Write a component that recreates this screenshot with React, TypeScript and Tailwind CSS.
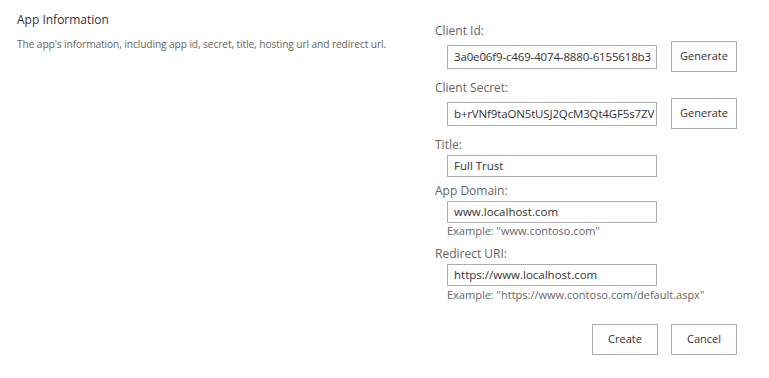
import React from "react";

function Label({ children }: { children: React.ReactNode }) {
  return <div className="text-[12px] leading-[16px] text-[#666666]">{children}</div>;
}

function Input({ value }: { value: string }) {
  return (
    <div className="w-[210px] h-[22px] border border-[#ababab] bg-white pl-[6px] pr-[2px] flex items-center overflow-hidden whitespace-nowrap text-[11.5px] text-[#333333]">
      {value}
    </div>
  );
}

function Btn({ children }: { children: React.ReactNode }) {
  return (
    <div className="w-[66px] h-[31px] border border-[#ababab] bg-white flex items-center justify-center text-[11px] text-[#333333]">
      {children}
    </div>
  );
}

export default function App() {
  return (
    <div className="w-[769px] h-[378px] bg-white flex" style={{ fontFamily: '"Open Sans", "Noto Sans", sans-serif' }}>
      <div className="w-[435px] pl-[17px] pt-[12px]">
        <div className="text-[12px] leading-[16px] text-[#333333]">App Information</div>
        <div className="mt-[9px] text-[10.2px] leading-[14px] text-[#666666] tracking-[-0.1px]">
          The app's information, including app id, secret, title, hosting url and redirect url.
        </div>
      </div>
      <div className="pt-[23px] flex flex-col">
        <Label>Client Id:</Label>
        <div className="mt-[2px] pl-[12px] flex items-center">
          <div className="w-[210px] h-[24px] border border-[#ababab] pl-[6px] flex items-center overflow-hidden whitespace-nowrap text-[11.5px] tracking-[-0.15px] text-[#333333]">
            3a0e06f9-c469-4074-8880-6155618b3
          </div>
          <div className="ml-[14px]"><Btn>Generate</Btn></div>
        </div>
        <div className="mt-[8px]"><Label>Client Secret:</Label></div>
        <div className="mt-[2px] pl-[12px] flex items-center">
          <div className="w-[210px] h-[24px] border border-[#ababab] pl-[6px] flex items-center overflow-hidden whitespace-nowrap text-[11.5px] tracking-[-0.15px] text-[#333333]">
            b+rVNf9taON5tUSJ2QcM3Qt4GF5s7ZV
          </div>
          <div className="ml-[14px]"><Btn>Generate</Btn></div>
        </div>
        <div className="mt-[8px]"><Label>Title:</Label></div>
        <div className="mt-[2px] pl-[12px]"><Input value="Full Trust" /></div>
        <div className="mt-[6px]"><Label>App Domain:</Label></div>
        <div className="mt-[2px] pl-[12px]"><Input value="www.localhost.com" /></div>
        <div className="mt-[1px] pl-[12px] text-[11px] leading-[14px] text-[#666666]">Example: "www.contoso.com"</div>
        <div className="mt-[8px]"><Label>Redirect URI:</Label></div>
        <div className="mt-[2px] pl-[12px]"><Input value="https://www.localhost.com" /></div>
        <div className="mt-[2px] pl-[12px] text-[11px] leading-[14px] text-[#666666]">Example: "https://www.contoso.com/default.aspx"</div>
        <div className="mt-[22px] flex justify-end gap-[13px] w-[302px]">
          <Btn>Create</Btn>
          <Btn>Cancel</Btn>
        </div>
      </div>
    </div>
  );
}
